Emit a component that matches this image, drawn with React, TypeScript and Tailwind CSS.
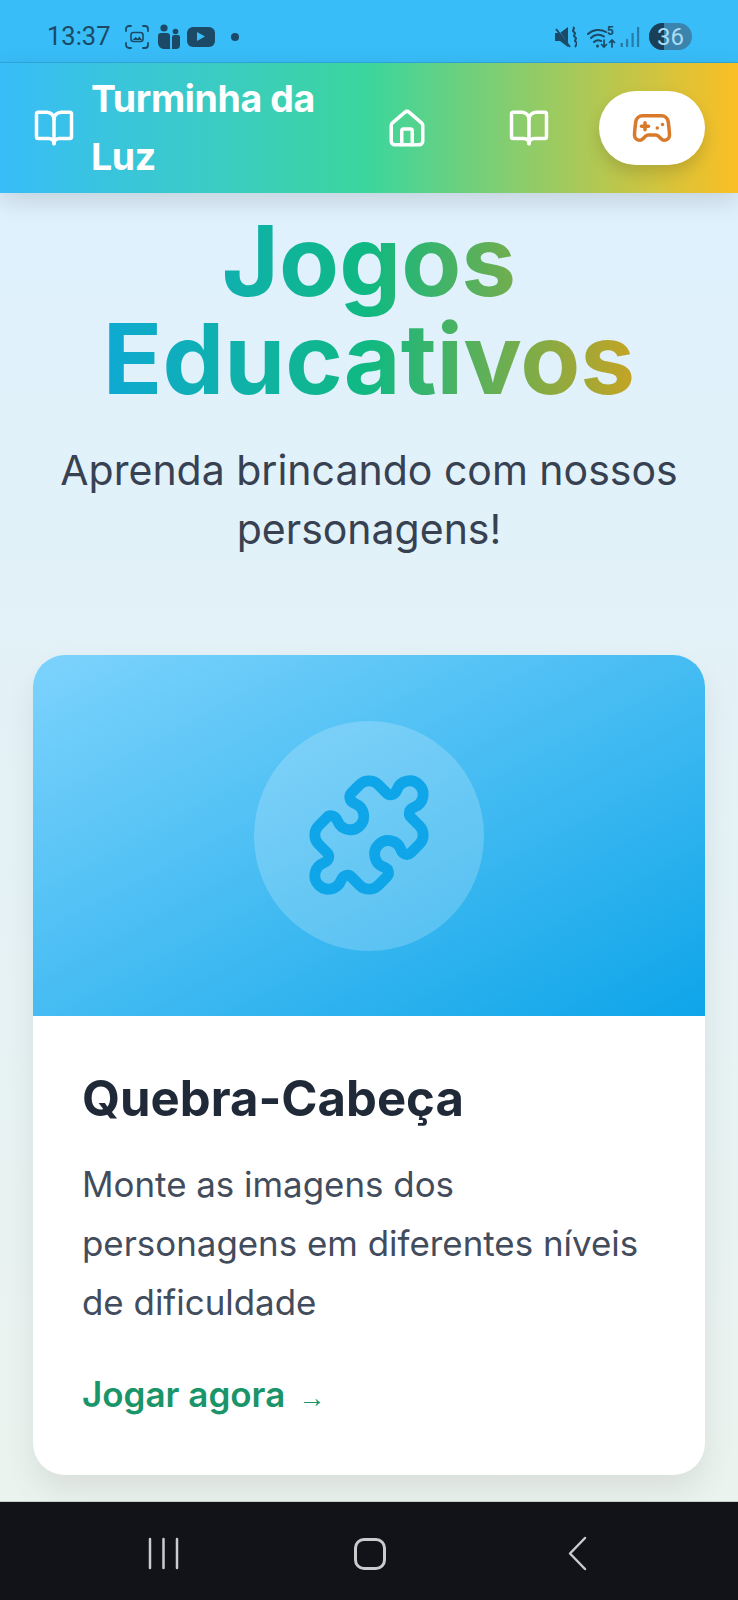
import { BookOpen, House, Gamepad2 } from "lucide-react";

const font = { fontFamily: "Inter, 'Liberation Sans', sans-serif" };

function StatusBar() {
  return (
    <div className="h-[63px] shrink-0 bg-[#38bdf8] border-b border-[#2fa8dc] flex items-center justify-between pl-[47px] pr-[46px] pt-[11px] text-[#1c4a66]">
      <div className="flex items-center">
        <span className="text-[25.500px] leading-none font-normal" style={{ fontFamily: "Roboto, sans-serif" }}>13:37</span>
        <svg className="ml-[13px]" width="26" height="26" viewBox="0 0 26 26" fill="none" stroke="currentColor" strokeWidth="1.8" strokeLinecap="round">
          <path d="M2 7V5a3 3 0 0 1 3-3h2M19 2h2a3 3 0 0 1 3 3v2M24 19v2a3 3 0 0 1-3 3h-2M7 24H5a3 3 0 0 1-3-3v-2" />
          <rect x="7" y="8.5" width="12" height="9" rx="2.5" strokeWidth="1.6" />
          <path d="M8.5 16l3-3 2 1.5 2-2 2.5 3.5z" fill="currentColor" stroke="none" />
        </svg>
        <svg className="ml-[7px]" width="24" height="26" viewBox="0 0 24 26" fill="currentColor">
          <circle cx="7" cy="4" r="3.6" /><circle cx="18.5" cy="7.5" r="2.8" />
          <path d="M1 12a3 3 0 0 1 3-3h6a3 3 0 0 1 3 3v13H7a6 6 0 0 1-6-6zM15 13a2 2 0 0 1 2-2h4a2 2 0 0 1 2 2v8a4 4 0 0 1-4 4h-4z" />
        </svg>
        <div className="ml-[6px] w-[28px] h-[20px] rounded-[6px] bg-current flex items-center justify-center">
          <svg width="11" height="11" viewBox="0 0 11 11"><path d="M2 1l8 4.5L2 10z" fill="#38bdf8" /></svg>
        </div>
        <div className="w-[8px] h-[8px] rounded-full bg-current ml-[16px]" />
      </div>
      <div className="flex items-center">
        <svg width="22" height="22" viewBox="0 0 22 22" fill="currentColor">
          <path d="M0 7h5l8-6v20l-8-6H0z" />
          <path d="M1 1l13 19" stroke="#38bdf8" strokeWidth="1.200" />
          <path d="M1 3l14 18" stroke="currentColor" strokeWidth="2" />
          <path d="M18 1c3 2-2 3 1 5s-2 3 1 5-2 3 1 5-2 3 0 5" fill="none" stroke="currentColor" strokeWidth="2" />
        </svg>
        <svg className="ml-[10px]" width="30" height="24" viewBox="0 0 30 24" fill="none" stroke="currentColor" strokeWidth="2" strokeLinecap="round">
          <path d="M1 9a15 15 0 0 1 18-2M4 13a10 10 0 0 1 13-1.500M7 17a6 6 0 0 1 7-1" />
          <circle cx="10.500" cy="21" r="1.500" fill="currentColor" stroke="none" />
          <path d="M17 15v7m-2.500-2.500 2.500 2.500 2.500-2.500M25 22v-7m-2.500 2.500 2.500-2.500 2.500 2.500" strokeWidth="1.700" />
          <text x="20" y="10" fontSize="12" fontWeight="700" fill="currentColor" stroke="none" fontFamily="Roboto, sans-serif">5</text>
        </svg>
        <svg className="ml-[3px] opacity-55" width="20" height="24" viewBox="0 0 20 24" fill="currentColor">
          <rect x="0.500" y="18" width="2.500" height="4" /><rect x="6" y="14" width="2.200" height="8" /><rect x="11.500" y="8" width="2.200" height="14" /><rect x="17" y="2" width="2.200" height="20" />
        </svg>
        <div className="relative w-[43px] h-[27px] rounded-full bg-[#3a84ae] overflow-hidden ml-[9px]">
          <div className="h-full w-[15px] bg-[#1a3f58]" />
          <span className="absolute inset-0 flex items-center justify-center text-[24px] leading-none text-[#a9dcf6]" style={{ fontFamily: "Roboto, sans-serif" }}>36</span>
        </div>
      </div>
    </div>
  );
}

function Header() {
  return (
    <header className="h-[130px] shrink-0 bg-linear-to-r/srgb from-[#38bdf8] via-[#3cd69d] to-[#fbbf24] shadow-[0_8px_24px_rgba(0,0,0,0.13)] relative z-10 flex items-center pl-[33px] pr-[33px] justify-between text-white">
      <div className="flex items-center gap-[16px] w-[290px]">
        <BookOpen className="w-[42px] h-[42px] shrink-0" strokeWidth={2} />
        <span className="text-[37.500px] leading-[58px] font-bold w-[240px] tracking-[-0.4px]">Turminha da Luz</span>
      </div>
      <div className="flex items-center">
        <House className="w-[42px] h-[42px] mr-[80px] translate-y-[1px]" strokeWidth={2} />
        <BookOpen className="w-[42px] h-[42px] mr-[49px]" strokeWidth={2} />
        <div className="w-[106px] h-[74px] rounded-full bg-white flex items-center justify-center shadow-[0_8px_16px_rgba(0,0,0,0.14)]">
          <Gamepad2 className="w-[42px] h-[42px] text-[#d97a2b]" strokeWidth={2} />
        </div>
      </div>
    </header>
  );
}

export default function App() {
  return (
    <div className="w-[738px] h-[1600px] flex flex-col overflow-hidden" style={font}>
      <StatusBar />
      <Header />
      <main className="flex-1 min-h-0 overflow-hidden bg-linear-to-b/srgb from-[#dff1fd] to-[#ebf3ee] px-[33px] flex flex-col">
        <h1 className="text-[98px] leading-[98px] font-bold text-center mt-[19px] bg-clip-text text-transparent bg-linear-to-r/srgb from-[#0ea5e9] via-[#10b981] to-[#f59e0b]">Jogos Educativos</h1>
        <p className="text-[41px] leading-[59px] text-center text-[#374151] mt-[33px]">Aprenda brincando com nossos personagens!</p>
        <article className="mt-[96px] h-[820px] shrink-0 rounded-[32px] bg-white overflow-hidden shadow-[0_16px_32px_rgba(0,0,0,0.08)] flex flex-col">
          <div className="h-[361px] shrink-0 bg-linear-to-br/srgb from-[#7dd3fc] to-[#0ea5e9] flex items-center justify-center">
            <div className="w-[230px] h-[230px] rounded-full bg-white/20 flex items-center justify-center">
              <svg className="w-[130px] h-[130px] text-[#0ea5e9] -translate-y-[1px]" viewBox="0 0 24 24" fill="none" stroke="currentColor" strokeWidth="2" strokeLinecap="round" strokeLinejoin="round">
                <path d="M19.439 7.85c-.049.322.059.648.289.878l1.568 1.568c.47.47.706 1.087.706 1.704s-.235 1.233-.706 1.704l-1.611 1.611a.98.98 0 0 1-.837.276c-.47-.07-.802-.48-.968-.925a2.501 2.501 0 1 0-3.214 3.214c.446.166.855.497.925.968a.979.979 0 0 1-.276.837l-1.61 1.61a2.404 2.404 0 0 1-1.705.707 2.402 2.402 0 0 1-1.704-.706l-1.568-1.568a1.026 1.026 0 0 0-.877-.29c-.493.074-.84.504-1.02.968a2.5 2.5 0 1 1-3.237-3.237c.464-.18.894-.527.967-1.02a1.026 1.026 0 0 0-.289-.877l-1.568-1.568A2.402 2.402 0 0 1 1.998 12c0-.617.236-1.234.706-1.704L4.23 8.77c.24-.24.581-.353.917-.303.515.077.877.528 1.073 1.01a2.5 2.5 0 1 0 3.259-3.259c-.482-.196-.933-.558-1.01-1.073-.05-.336.062-.676.303-.917l1.525-1.525A2.402 2.402 0 0 1 12 1.998c.617 0 1.234.236 1.704.706l1.568 1.568c.23.23.556.338.877.29.493-.074.84-.504 1.02-.968a2.5 2.5 0 1 1 3.237 3.237c-.464.18-.894.527-.967 1.02Z" />
              </svg>
            </div>
          </div>
          <div className="px-[49px] pt-[51px]">
            <h2 className="text-[49px] leading-[64px] font-bold text-[#1f2937]">Quebra-Cabeça</h2>
            <p className="text-[34.900px] leading-[59px] text-[#424c5c] mt-[24px]">Monte as imagens dos personagens em diferentes níveis de dificuldade</p>
            <div className="text-[35px] leading-[48px] font-semibold text-[#1a9469] mt-[38px] flex items-center">
              <span>Jogar agora</span>
              <span className="ml-[13px] text-[27px] leading-none mt-[8px]" style={{ fontFamily: "'Liberation Sans', sans-serif" }}>→</span>
            </div>
          </div>
        </article>
      </main>
      <nav className="h-[99px] shrink-0 bg-[#111318] border-t border-[#c8cfcb] flex items-center pl-[148px] pt-[5px]">
        <svg width="31" height="33" viewBox="0 0 31 33" stroke="#c9cbcd" strokeWidth="2.5" strokeLinecap="round"><path d="M2 2v29M15.500 2v29M29 2v29" /></svg>
        <div className="ml-[175px] w-[32px] h-[32px] rounded-[10px] border-[3px] border-[#c9cbcd]" />
        <svg className="ml-[181px]" width="20" height="35" viewBox="0 0 20 35" fill="none" stroke="#c9cbcd" strokeWidth="2.5" strokeLinecap="round" strokeLinejoin="round"><path d="M18 2 3 17.500 18 33" /></svg>
      </nav>
    </div>
  );
}
